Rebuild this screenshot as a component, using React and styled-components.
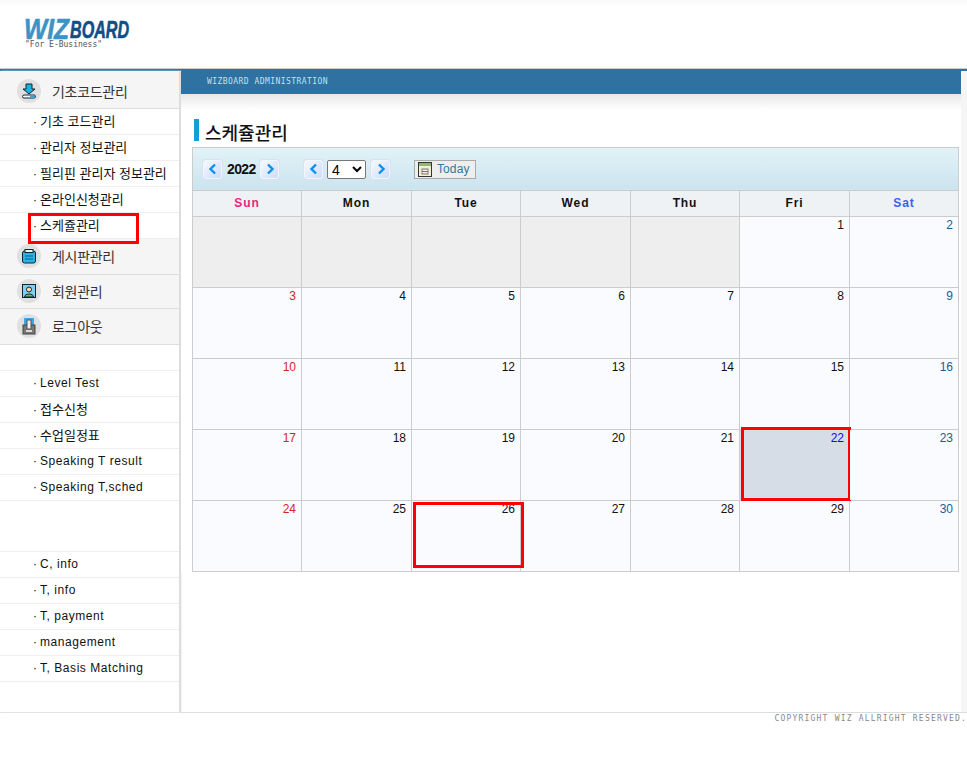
import React from "react"
import styled, { createGlobalStyle } from "styled-components"

const Global = createGlobalStyle`
  html, body { margin: 0; padding: 0; background: #fff; }
  * { box-sizing: border-box; }
  body { font-family: "Liberation Sans", "Noto Sans CJK KR", sans-serif; color: #000; }
`

const UpIcon = () => (
  <svg width="16" height="16" viewBox="0 0 16 16">
    <path d="M5 1h6v5h3l-6 5-6-5h3z" fill="#16b4e0" stroke="#123" strokeWidth="1" />
    <rect x="1.5" y="12" width="13" height="3" rx="1.5" fill="#fff" stroke="#123" />
    <rect x="9" y="12.5" width="5" height="2" fill="#2aa8d8" />
  </svg>
)

const BoardIcon = () => (
  <svg width="16" height="16" viewBox="0 0 16 16">
    <rect x="1.5" y="3" width="13" height="12" rx="2" fill="#28b4e8" stroke="#123" />
    <rect x="4" y="1.5" width="8" height="3" fill="#dff" stroke="#123" />
    <path d="M4 8h8M4 11h8" stroke="#0b5f8a" />
  </svg>
)

const MemberIcon = () => (
  <svg width="16" height="16" viewBox="0 0 16 16">
    <rect x="1.5" y="1.5" width="13" height="13" fill="#7fd0f0" stroke="#123" />
    <circle cx="8" cy="6.5" r="2.5" fill="#f5dcb0" stroke="#123" />
    <path d="M3.5 14c0-4 9-4 9 0z" fill="#5cb85c" stroke="#123" />
  </svg>
)

const LogoutIcon = () => (
  <svg width="16" height="18" viewBox="0 0 16 18">
    <rect x="3" y="1" width="10" height="7" fill="#38a8e8" />
    <rect x="2" y="8" width="12" height="9" fill="#777" stroke="#444" />
    <rect x="6" y="3" width="4" height="9" fill="#eee" stroke="#555" />
    <rect x="5" y="13" width="6" height="2" fill="#ddd" />
  </svg>
)

const Chevron = ({ dir }) => (
  <svg width="10" height="12" viewBox="0 0 10 12">
    <path
      d={dir === "left" ? "M7 1.5 2.5 6 7 10.5" : "M3 1.5 7.5 6 3 10.5"}
      fill="none"
      stroke="#0a90ee"
      strokeWidth="2.4"
    />
  </svg>
)

const CalIcon = () => (
  <svg width="14" height="15" viewBox="0 0 14 15">
    <rect x="0.5" y="0.5" width="13" height="14" fill="#f4f0d8" stroke="#333" />
    <rect x="1" y="1" width="12" height="3" fill="#8fb878" />
    <rect x="4" y="7" width="6" height="5" fill="none" stroke="#777" />
    <path d="M4 9.5h6" stroke="#777" />
  </svg>
)

const menuA = ["기초 코드관리", "관리자 정보관리", "필리핀 관리자 정보관리", "온라인신청관리"]
const menuB = ["Level Test", "접수신청", "수업일정표", "Speaking T result", "Speaking T,sched"]
const menuC = ["C, info", "T, info", "T, payment", "management", "T, Basis Matching"]
const weekDays = [
  { name: "Sun", kind: "sun" },
  { name: "Mon" },
  { name: "Tue" },
  { name: "Wed" },
  { name: "Thu" },
  { name: "Fri" },
  { name: "Sat", kind: "sat" },
]

const days = [...Array(5).fill(null), ...Array.from({ length: 30 }, (_, i) => i + 1)]
const isHangul = text => /[가-힣]/.test(text)

const App = () => (
  <>
    <Global />
    <Header>
      <Logo>
        <LogoMark>
          <Wiz>WIZ</Wiz>
          <Board>BOARD</Board>
        </LogoMark>
        <Tagline>"For E-Business"</Tagline>
      </Logo>
    </Header>
    <Body>
      <Sidebar>
        <SectionHead $height={38} $first>
          <IconCircle><UpIcon /></IconCircle>
          <SectionLabel>기초코드관리</SectionLabel>
        </SectionHead>
        {menuA.map(m => <SubRow key={m} $hangul={isHangul(m)}>{m}</SubRow>)}
        <SubRow $hangul>
          스케쥴관리
          <MenuMark />
        </SubRow>
        <SectionHead $height={36}>
          <IconCircle><BoardIcon /></IconCircle>
          <SectionLabel>게시판관리</SectionLabel>
        </SectionHead>
        <SectionHead $height={34}>
          <IconCircle><MemberIcon /></IconCircle>
          <SectionLabel>회원관리</SectionLabel>
        </SectionHead>
        <SectionHead $height={36}>
          <IconCircle><LogoutIcon /></IconCircle>
          <SectionLabel>로그아웃</SectionLabel>
        </SectionHead>
        <BlankRow $height={26} />
        {menuB.map(m => <SubRow key={m} $hangul={isHangul(m)}>{m}</SubRow>)}
        <BlankRow $height={51} />
        {menuC.map(m => <SubRow key={m}>{m}</SubRow>)}
      </Sidebar>
      <Main>
        <Banner>WIZBOARD ADMINISTRATION</Banner>
        <Content>
          <Title>스케쥴관리</Title>
          <Calendar>
            <Toolbar>
              <NavButton><Chevron dir="left" /></NavButton>
              <Year>2022</Year>
              <NavButton><Chevron dir="right" /></NavButton>
              <NavButton $left={25}><Chevron dir="left" /></NavButton>
              <MonthSelect defaultValue="4">
                {Array.from({ length: 12 }, (_, i) => (
                  <option key={i} value={i + 1}>{i + 1}</option>
                ))}
              </MonthSelect>
              <NavButton><Chevron dir="right" /></NavButton>
              <TodayButton>
                <CalIcon />
                Today
              </TodayButton>
            </Toolbar>
            <Grid>
              {weekDays.map(d => (
                <DayName key={d.name} $kind={d.kind}>{d.name}</DayName>
              ))}
              {days.map((d, i) => (
                <Cell key={i} $empty={d === null} $today={d === 22}>
                  {d !== null && (
                    <DayNum $kind={d === 22 ? "today" : i % 7 === 0 ? "sun" : i % 7 === 6 ? "sat" : undefined}>
                      {d}
                    </DayNum>
                  )}
                  {d === 22 && <TodayMark />}
                  {d === 26 && <PickMark />}
                </Cell>
              ))}
            </Grid>
          </Calendar>
        </Content>
      </Main>
    </Body>
    <Footer>COPYRIGHT WIZ ALLRIGHT RESERVED.</Footer>
  </>
)

const Header = styled.header`
  height: 71px;
  border-bottom: 2px solid #2f71a0;
  background: linear-gradient(#f8f8f8, #fff 6px, #fff 68px, #ccc 68px);
  padding: 17px 0 0 24px;
`

const Logo = styled.div`
  width: 110px;
`

const LogoMark = styled.div`
  display: flex;
  align-items: flex-end;
  height: 23px;
  font: italic bold 30px/23px "Liberation Sans", sans-serif;
`

const Wiz = styled.span`
  color: #3c93c4;
  display: inline-block;
  width: 46px;
  transform: scaleX(0.82);
  transform-origin: left;
  -webkit-text-stroke: 0.6px #3c93c4;
`

const Board = styled.span`
  color: #0f4f86;
  font-size: 23px;
  line-height: 20px;
  display: inline-block;
  transform: scaleX(0.7);
  transform-origin: left;
  -webkit-text-stroke: 0.6px #0f4f86;
`

const Tagline = styled.div`
  margin-left: 1px;
  font: 8px/9px "DejaVu Sans Mono", monospace;
  color: #555;
  white-space: nowrap;
`

const Body = styled.div`
  display: flex;
  height: 642px;
  border-bottom: 1px solid #ddd;
`

const Sidebar = styled.nav`
  width: 181px;
  flex: none;
  border-right: 2px solid #ddd;
  border-top-right-radius: 2px;
  box-shadow: 1px 0 2px #f2f2f2;
`

const SectionHead = styled.div`
  height: ${p => p.$height}px;
  display: flex;
  align-items: center;
  padding-left: 17px;
  padding-top: ${p => (p.$first ? 2 : 0)}px;
  padding-bottom: ${p => (p.$first ? 0 : 2)}px;
  background: #f5f5f5;
  border-bottom: 1px solid #ddd;
`

const IconCircle = styled.span`
  width: 24px;
  height: 24px;
  border-radius: 50%;
  background: #e0e0e0;
  display: flex;
  align-items: center;
  justify-content: center;
  flex: none;
`

const SectionLabel = styled.span`
  margin-left: 11px;
  font: 14px "Noto Sans CJK KR", sans-serif;
  letter-spacing: -0.3px;
  color: #333;
`

const SubRow = styled.div`
  position: relative;
  height: 26px;
  border-bottom: 1px solid #eee;
  padding-left: 40px;
  font: ${p => (p.$hangul ? 13 : 12)}px/${p => (p.$hangul ? 26 : 24)}px "Liberation Sans", "Noto Sans CJK KR", sans-serif;
  letter-spacing: ${p => (p.$hangul ? 0 : 0.55)}px;
  color: #111;
  white-space: nowrap;
  &::before {
    content: "·";
    position: absolute;
    left: 33px;
    font-size: 12px;
  }
`

const BlankRow = styled.div`
  height: ${p => p.$height}px;
  border-bottom: 1px solid #eee;
`

const MenuMark = styled.span`
  position: absolute;
  left: 28px;
  top: 0;
  width: 111px;
  height: 31px;
  border: 3px solid #f00;
  z-index: 2;
`

const Main = styled.main`
  flex: 1;
  min-width: 0;
  border-right: 6px solid #f5f5f5;
`

const Banner = styled.div`
  height: 23px;
  background: #2f71a0;
  padding-left: 26px;
  font: 8px/21px "DejaVu Sans Mono", monospace;
  letter-spacing: 0.45px;
  color: #bfe2f2;
  white-space: nowrap;
`

const Content = styled.div`
  background: linear-gradient(#e8e8e8, #fff 16px);
  padding: 25px 0 0 11px;
`

const Title = styled.h1`
  margin: 0 0 6px 2px;
  height: 22px;
  border-left: 5px solid #12a0d2;
  padding-left: 6px;
  font: 500 18px/27px "Noto Sans CJK KR", sans-serif;
  color: #111;
  white-space: nowrap;
`

const Calendar = styled.div`
  width: 767px;
`

const Toolbar = styled.div`
  height: 43px;
  border: 1px solid #ccc;
  border-bottom: none;
  background: linear-gradient(#e2f2f8, #cde5ef 38px);
  display: flex;
  align-items: center;
  padding: 0 0 0 10px;
`

const NavButton = styled.span`
  width: 19px;
  height: 19px;
  margin-left: ${p => p.$left || 0}px;
  border: 1px solid #f2f6ff;
  border-radius: 3px;
  box-shadow: 0 0 0 1px #d8e2f0;
  background: linear-gradient(135deg, #f6f9ff, #ccdcfa);
  display: flex;
  align-items: center;
  justify-content: center;
  flex: none;
`

const Year = styled.span`
  width: 38px;
  padding-left: 5px;
  font: bold 14px "Liberation Sans", sans-serif;
  letter-spacing: -0.6px;
  color: #111;
`

const MonthSelect = styled.select`
  width: 39px;
  height: 19px;
  margin: 0 5px 0 4px;
  padding: 0;
  font: 14px "Liberation Sans", sans-serif;
  background: #fff;
  border: 1px solid #777;
  border-radius: 2px;
`

const TodayButton = styled.span`
  margin-left: 24px;
  width: 62px;
  height: 19px;
  border: 1px solid #aaa;
  background: #eee;
  display: flex;
  align-items: center;
  gap: 5px;
  padding-left: 3px;
  font: 12px "Liberation Sans", sans-serif;
  letter-spacing: 0.1px;
  color: #2f7a9c;
`

const Grid = styled.div`
  display: grid;
  grid-template-columns: 108px 109px 108px 109px 108px 109px 108px;
  grid-auto-rows: 70px;
  grid-template-rows: 25px;
  gap: 1px;
  padding: 1px;
  background: #ccc;
`

const dayColor = kind => ({ sun: "#d8222e", sat: "#1c5c96", today: "#0a0ae6" }[kind] || "#111")

const DayName = styled.div`
  background: #eef2f5;
  text-align: center;
  font: bold 12px/25px "Liberation Sans", sans-serif;
  letter-spacing: 0.9px;
  color: ${p => (p.$kind === "sun" ? "#e8267e" : p.$kind === "sat" ? "#3c60f0" : "#111")};
`

const Cell = styled.div`
  position: relative;
  background: ${p => (p.$today ? "#d6dde6" : p.$empty ? "#eee" : "#f9fbff")};
  padding: 1px 5px 0 0;
  text-align: right;
`

const DayNum = styled.span`
  display: block;
  font: 12px/14px "Liberation Sans", sans-serif;
  color: ${p => dayColor(p.$kind)};
`

const TodayMark = styled.span`
  position: absolute;
  inset: -3px -2px -1px 1px;
  border: 3px solid #f00;
`

const PickMark = styled.span`
  position: absolute;
  inset: 1px -4px 3px 1px;
  border: 3px solid #f00;
  z-index: 1;
`

const Footer = styled.footer`
  height: 49px;
  padding-top: 1px;
  text-align: right;
  white-space: nowrap;
  overflow: hidden;
  font: 8px/10px "DejaVu Sans Mono", monospace;
  letter-spacing: 1.2px;
  color: #888;
`

export default App
